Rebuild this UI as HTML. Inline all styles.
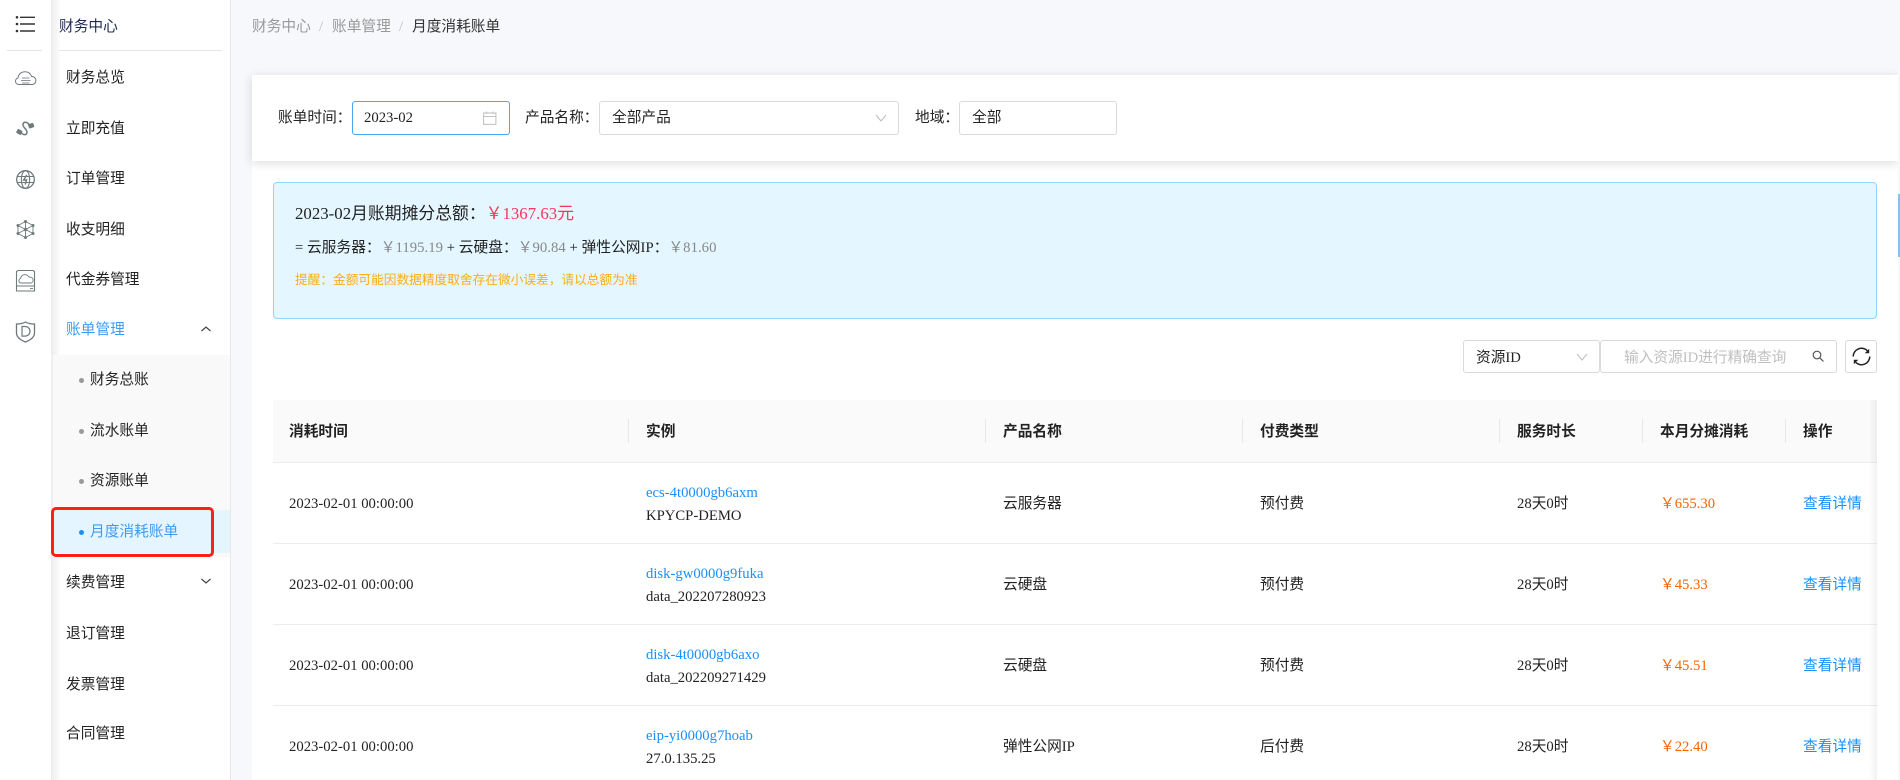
<!DOCTYPE html>
<html lang="zh-CN"><head><meta charset="utf-8"><title>月度消耗账单</title>
<style>
*{box-sizing:border-box}
html,body{margin:0;padding:0;width:1900px;height:780px;overflow:hidden;background:#f6f8fc}
body{position:relative;font-family:"Liberation Serif","Noto Sans CJK SC",serif;font-size:14.7px;color:#222}
.a{position:absolute}
.t{position:absolute;white-space:nowrap;line-height:20px;height:20px;margin-top:1px}
.b{font-weight:700}
.l{color:#1890ff}
.o{color:#fa6400}
.box{position:absolute;background:#fff;border:1px solid #d9d9d9;border-radius:3px}
svg{position:absolute;overflow:visible}
.h{position:absolute;top:419px;width:1px;height:24px;background:#e8e8e8}
.r{position:absolute;left:273px;width:1604px;height:1px;background:#ececec}
.dot{position:absolute;width:5px;height:5px;border-radius:50%;background:#999;left:79px}
</style></head><body>

<!-- rail -->
<div class="a" style="left:0;top:0;width:51px;height:780px;background:#fff"></div>
<div class="a" style="left:51px;top:0;width:179px;height:780px;background:#fff"></div>
<div class="a" style="left:51px;top:0;width:10px;height:780px;background:linear-gradient(90deg,#ececec,#fff)"></div>
<div class="a" style="left:230px;top:0;width:1px;height:780px;background:#e6e8ec"></div>
<div class="a" style="left:7px;top:50px;width:35px;height:1px;background:#e3e3e3"></div>

<svg style="left:0;top:0" width="51" height="350" fill="none" stroke="#6d7a7a" stroke-width="1.1">
  <path d="M20 17.3H35M20 24H35M20 31H35" stroke="#333" stroke-width="1.4"/>
  <g fill="#333" stroke="none"><circle cx="17" cy="17.3" r="1.3"/><circle cx="17" cy="24" r="1.3"/><circle cx="17" cy="31" r="1.3"/></g>
  <path d="M20 84.5h-1.200a3.300 3.300 0 0 1-.8-6.500c.3-4 3.500-6.300 7-6.300 3.200 0 5.600 1.800 6.600 4.800a4 4 0 0 1 .6 8z" stroke-width="1"/>
  <path d="M22 78h7.500M21 80.500h9.500M22 83h7.500" stroke-width=".9" stroke="#8a9595"/>
  <path d="M30 126C28 122 24 121 23 124C22 127 27 129 27 132C27 136 23 135 20 132" stroke-width="1.500"/>
  <rect x="28.500" y="123.500" width="5.500" height="4.500" rx="1" transform="rotate(-20 31 126)" fill="#6d7a7a" stroke="none"/>
  <rect x="16.500" y="129.500" width="5.500" height="4.500" rx="1" transform="rotate(30 19 132)" fill="#6d7a7a" stroke="none"/>
  <circle cx="25.500" cy="179.500" r="8.800" stroke-width="1.300"/>
  <ellipse cx="25.500" cy="179.500" rx="4.200" ry="8.800"/>
  <path d="M17 176.500h17M17 182.500h17"/>
  <path d="M26.800 175l-3.200 5h3l-1.400 4.500" stroke-width="1.400"/>
  <path d="M25.500 221.500l7.500 4v8l-7.500 4-7.500-4v-8zM25.500 221.500v16M18 225.500l15 8M33 225.500l-15 8" stroke-width=".9"/>
  <g fill="#6d7a7a" stroke="none"><circle cx="25.500" cy="221.500" r="1.500"/><circle cx="33" cy="225.500" r="1.500"/><circle cx="33" cy="233.500" r="1.500"/><circle cx="25.500" cy="237.500" r="1.500"/><circle cx="18" cy="233.500" r="1.500"/><circle cx="18" cy="225.500" r="1.500"/><circle cx="25.500" cy="229.500" r="1.700"/></g>
  <path d="M18 270.500h15l1.500 1v19.500h-18v-19.500zM16.500 286h18"/>
  <path d="M22.500 283h-1.500a2.300 2.300 0 0 1-.4-4.500 4.500 4.500 0 0 1 8.500-1.300 3 3 0 0 1 2 5.800z" stroke-width=".9"/>
  <path d="M30 288.500h3" stroke-width=".9"/>
  <path d="M25.500 322c2.500 1.500 5.500 2 9 2v9c0 4-4 7-9 9-5-2-9-5-9-9v-9c3.500 0 6.500-.5 9-2z" stroke-width="1.300"/>
  <path d="M22 326.500h3.200a4.800 4.800 0 0 1 0 9.600H22z" stroke-width="1.200"/>
</svg>

<!-- sidebar -->
<div class="t" style="left:59px;top:16px;color:#1d2a50">财务中心</div>
<div class="a" style="left:59px;top:50px;width:163px;height:1px;background:#e6e6e6"></div>
<div class="t" style="left:66px;top:67px">财务总览</div>
<div class="t" style="left:66px;top:118px">立即充值</div>
<div class="t" style="left:66px;top:168px">订单管理</div>
<div class="t" style="left:66px;top:219px">收支明细</div>
<div class="t" style="left:66px;top:269px">代金券管理</div>
<div class="t" style="left:66px;top:319px;color:#3e9bf5">账单管理</div>
<svg style="left:200px;top:325px" width="12" height="8" fill="none" stroke="#444" stroke-width="1.200"><path d="M1.500 6L6 2l4.500 4"/></svg>

<div class="a" style="left:53px;top:355px;width:177px;height:202px;background:#f9f9fa"></div>
<div class="a" style="left:53px;top:510px;width:177px;height:43px;background:#e4f5ff"></div>
<div class="dot" style="top:378px"></div><div class="t" style="left:90px;top:369px">财务总账</div>
<div class="dot" style="top:429px"></div><div class="t" style="left:90px;top:420px">流水账单</div>
<div class="dot" style="top:479px"></div><div class="t" style="left:90px;top:470px">资源账单</div>
<div class="dot" style="top:530px;background:#1890ff"></div><div class="t" style="left:90px;top:521px;color:#3e9bf5">月度消耗账单</div>
<div class="a" style="left:51px;top:507px;width:163px;height:50px;border:3.500px solid #ff2014;border-radius:5px"></div>

<div class="t" style="left:66px;top:572px">续费管理</div>
<svg style="left:200px;top:577px" width="12" height="8" fill="none" stroke="#444" stroke-width="1.200"><path d="M1.500 2L6 6l4.500-4"/></svg>
<div class="t" style="left:66px;top:623px">退订管理</div>
<div class="t" style="left:66px;top:674px">发票管理</div>
<div class="t" style="left:66px;top:723px">合同管理</div>

<!-- breadcrumb -->
<div class="t" style="left:252px;top:16px;color:#999">财务中心</div>
<div class="t" style="left:319px;top:16px;color:#bbb">/</div>
<div class="t" style="left:332px;top:16px;color:#999">账单管理</div>
<div class="t" style="left:399px;top:16px;color:#bbb">/</div>
<div class="t" style="left:412px;top:16px;color:#333">月度消耗账单</div>

<!-- content panel -->
<div class="a" style="left:252px;top:161px;width:1646px;height:619px;background:#fff"></div>
<div class="a" style="left:252px;top:75px;width:1646px;height:86px;background:#fff;box-shadow:0 2px 10px rgba(0,0,0,.14)"></div>

<div class="t" style="left:278px;top:107px">账单时间：</div>
<div class="box" style="left:352px;top:101px;width:158px;height:34px;border-color:#4ba6f5"></div>
<div class="t" style="left:364px;top:107px">2023-02</div>
<svg style="left:483px;top:111px" width="14" height="14" fill="none" stroke="#c4c4c4" stroke-width="1.100"><rect x=".6" y="2" width="12.300" height="11.400"/><path d="M.6 5.500h12.300M3.500 .5v2.500M10 .5v2.500"/></svg>

<div class="t" style="left:525px;top:107px">产品名称：</div>
<div class="box" style="left:599px;top:101px;width:300px;height:34px"></div>
<div class="t" style="left:612px;top:107px">全部产品</div>
<svg style="left:875px;top:114px" width="12" height="8" fill="none" stroke="#c0c0c0" stroke-width="1.100"><path d="M1 1l5 6 5-6"/></svg>

<div class="t" style="left:915px;top:107px">地域：</div>
<div class="box" style="left:959px;top:101px;width:158px;height:34px"></div>
<div class="t" style="left:972px;top:107px">全部</div>

<!-- alert -->
<div class="a" style="left:273px;top:182px;width:1604px;height:137px;background:#e4f6ff;border:1px solid #91d5ff;border-radius:4px"></div>
<div class="t" style="left:295px;top:203px;font-size:16.800px;letter-spacing:.03px">2023-02月账期摊分总额：<span style="color:#f5365c">￥1367.63元</span></div>
<div class="t" style="left:295px;top:237px;letter-spacing:.05px">= 云服务器：<span style="color:#888">￥1195.19</span> + 云硬盘：<span style="color:#888">￥90.84</span> + 弹性公网IP：<span style="color:#888">￥81.60</span></div>
<div class="t" style="left:295px;top:269px;font-size:12.700px;color:#faad14">提醒：金额可能因数据精度取舍存在微小误差，请以总额为准</div>

<!-- toolbar -->
<div class="box" style="left:1463px;top:340px;width:137px;height:33px"></div>
<div class="t" style="left:1476px;top:347px">资源ID</div>
<svg style="left:1576px;top:353px" width="12" height="8" fill="none" stroke="#c0c0c0" stroke-width="1.100"><path d="M1 1l5 6 5-6"/></svg>
<div class="box" style="left:1600px;top:340px;width:237px;height:33px"></div>
<div class="t" style="left:1624px;top:347px;color:#bfbfbf">输入资源ID进行精确查询</div>
<svg style="left:1812px;top:350px" width="13" height="13" fill="none" stroke="#555" stroke-width="1.200"><circle cx="5" cy="5" r="3.800"/><path d="M7.800 7.800l3.700 3.700"/></svg>
<div class="box" style="left:1845px;top:340px;width:32px;height:33px"></div>
<svg style="left:1852px;top:347px" width="19" height="19" fill="none" stroke="#222" stroke-width="1.500"><path d="M1.200 9.500A8.300 8.300 0 0 1 15.300 3.600M17.800 9.500A8.300 8.300 0 0 1 3.700 15.400"/><path d="M17.200 1.800v4.500h-4.500zM1.800 17.200v-4.500h4.500z" fill="#222" stroke="none"/></svg>

<!-- table header -->
<div class="a" style="left:273px;top:400px;width:1604px;height:62px;background:#fafafa"></div>
<div class="r" style="top:462px"></div>
<div class="r" style="top:543px"></div>
<div class="r" style="top:624px"></div>
<div class="r" style="top:705px"></div>
<div class="h" style="left:628px"></div><div class="h" style="left:985px"></div><div class="h" style="left:1242px"></div><div class="h" style="left:1499px"></div><div class="h" style="left:1642px"></div><div class="h" style="left:1785px"></div>
<div class="a" style="left:1869px;top:400px;width:8px;height:380px;background:linear-gradient(90deg,rgba(0,0,0,0),rgba(0,0,0,.05))"></div>
<div class="a" style="left:1898px;top:194px;width:2px;height:63px;background:#7fc4f5"></div>
<div class="a" style="left:1898px;top:0;width:2px;height:194px;background:#f6f8fc"></div>

<div class="t b" style="left:289px;top:421px">消耗时间</div>
<div class="t b" style="left:646px;top:421px">实例</div>
<div class="t b" style="left:1003px;top:421px">产品名称</div>
<div class="t b" style="left:1260px;top:421px">付费类型</div>
<div class="t b" style="left:1517px;top:421px">服务时长</div>
<div class="t b" style="left:1660px;top:421px">本月分摊消耗</div>
<div class="t b" style="left:1803px;top:421px">操作</div>

<!-- row 1 -->
<div class="t" style="left:289px;top:493px">2023-02-01 00:00:00</div>
<div class="t l" style="left:646px;top:482px">ecs-4t0000gb6axm</div>
<div class="t" style="left:646px;top:505px">KPYCP-DEMO</div>
<div class="t" style="left:1003px;top:493px">云服务器</div>
<div class="t" style="left:1260px;top:493px">预付费</div>
<div class="t" style="left:1517px;top:493px">28天0时</div>
<div class="t o" style="left:1660px;top:493px">￥655.30</div>
<div class="t l" style="left:1803px;top:493px">查看详情</div>
<!-- row 2 -->
<div class="t" style="left:289px;top:574px">2023-02-01 00:00:00</div>
<div class="t l" style="left:646px;top:563px">disk-gw0000g9fuka</div>
<div class="t" style="left:646px;top:586px">data_202207280923</div>
<div class="t" style="left:1003px;top:574px">云硬盘</div>
<div class="t" style="left:1260px;top:574px">预付费</div>
<div class="t" style="left:1517px;top:574px">28天0时</div>
<div class="t o" style="left:1660px;top:574px">￥45.33</div>
<div class="t l" style="left:1803px;top:574px">查看详情</div>
<!-- row 3 -->
<div class="t" style="left:289px;top:655px">2023-02-01 00:00:00</div>
<div class="t l" style="left:646px;top:644px">disk-4t0000gb6axo</div>
<div class="t" style="left:646px;top:667px">data_202209271429</div>
<div class="t" style="left:1003px;top:655px">云硬盘</div>
<div class="t" style="left:1260px;top:655px">预付费</div>
<div class="t" style="left:1517px;top:655px">28天0时</div>
<div class="t o" style="left:1660px;top:655px">￥45.51</div>
<div class="t l" style="left:1803px;top:655px">查看详情</div>
<!-- row 4 -->
<div class="t" style="left:289px;top:736px">2023-02-01 00:00:00</div>
<div class="t l" style="left:646px;top:725px">eip-yi0000g7hoab</div>
<div class="t" style="left:646px;top:748px">27.0.135.25</div>
<div class="t" style="left:1003px;top:736px">弹性公网IP</div>
<div class="t" style="left:1260px;top:736px">后付费</div>
<div class="t" style="left:1517px;top:736px">28天0时</div>
<div class="t o" style="left:1660px;top:736px">￥22.40</div>
<div class="t l" style="left:1803px;top:736px">查看详情</div>

</body></html>
